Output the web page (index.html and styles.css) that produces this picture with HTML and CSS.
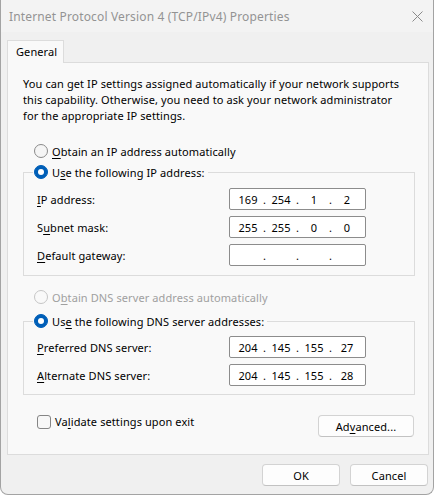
FILE: index.html
```html
<!DOCTYPE html>
<html lang="en">
<head>
<meta charset="utf-8">
<title>Internet Protocol Version 4 (TCP/IPv4) Properties</title>
<link rel="stylesheet" href="styles.css">
</head>
<body>
<div class="window">
  <div class="titlebar">
    <span class="title">Internet Protocol Version 4 (TCP/IPv4) Properties</span>
    <svg class="close" width="11" height="11" viewBox="0 0 11 11" aria-hidden="true"><path d="M0.5 0.5 L10.5 10.5 M10.5 0.5 L0.5 10.5" stroke="#8a8a8a" stroke-width="1" fill="none"/></svg>
  </div>
  <div class="client">
    <div class="tabs"><div class="tab">General</div></div>
    <div class="panel">
      <p class="intro">You can get IP settings assigned automatically if your network supports<br>this capability. Otherwise, you need to ask your network administrator<br>for the appropriate IP settings.</p>

      <div class="radio-row first-radio">
        <span class="radio"></span><span><u>O</u>btain an IP address automatically</span>
      </div>

      <fieldset class="group ip-group">
        <legend class="radio-row legend"><span class="radio checked"></span><span>U<u>s</u>e the following IP address:</span></legend>
        <div class="field-row">
          <span class="label"><u>I</u>P address:</span>
          <div class="ip-box"><span class="seg">169</span><span class="dot">.</span><span class="seg">254</span><span class="dot">.</span><span class="seg">1</span><span class="dot">.</span><span class="seg">2</span></div>
        </div>
        <div class="field-row">
          <span class="label">S<u>u</u>bnet mask:</span>
          <div class="ip-box"><span class="seg">255</span><span class="dot">.</span><span class="seg">255</span><span class="dot">.</span><span class="seg">0</span><span class="dot">.</span><span class="seg">0</span></div>
        </div>
        <div class="field-row">
          <span class="label"><u>D</u>efault gateway:</span>
          <div class="ip-box"><span class="seg"></span><span class="dot">.</span><span class="seg"></span><span class="dot">.</span><span class="seg"></span><span class="dot">.</span><span class="seg"></span></div>
        </div>
      </fieldset>

      <div class="radio-row dns-radio disabled">
        <span class="radio"></span><span>O<u>b</u>tain DNS server address automatically</span>
      </div>

      <fieldset class="group dns-group">
        <legend class="radio-row legend"><span class="radio checked"></span><span>Us<u>e</u> the following DNS server addresses:</span></legend>
        <div class="field-row">
          <span class="label"><u>P</u>referred DNS server:</span>
          <div class="ip-box"><span class="seg">204</span><span class="dot">.</span><span class="seg">145</span><span class="dot">.</span><span class="seg">155</span><span class="dot">.</span><span class="seg">27</span></div>
        </div>
        <div class="field-row">
          <span class="label"><u>A</u>lternate DNS server:</span>
          <div class="ip-box"><span class="seg">204</span><span class="dot">.</span><span class="seg">145</span><span class="dot">.</span><span class="seg">155</span><span class="dot">.</span><span class="seg">28</span></div>
        </div>
      </fieldset>

      <div class="bottom-row">
        <div class="check-row"><span class="checkbox"></span><span>Va<u>l</u>idate settings upon exit</span></div>
        <button class="btn advanced" type="button">Ad<u>v</u>anced...</button>
      </div>
    </div>
    <div class="dialog-buttons">
      <button class="btn" type="button">OK</button>
      <button class="btn" type="button">Cancel</button>
    </div>
  </div>
</div>
</body>
</html>
```
FILE: styles.css
```css
* { box-sizing: border-box; }
html, body { margin: 0; padding: 0; }
body {
  width: 434px;
  height: 497px;
  background: #ffffff;
  font-family: "Noto Sans", "Open Sans", sans-serif;
  font-size: 11px;
  letter-spacing: 0.1px;
  color: #000;
  overflow: hidden;
}
u { text-decoration: underline; text-underline-offset: 2px; }

.window {
  width: 434px;
  height: 495px;
  background: #f0f0f0;
  border: 1px solid #a3a3a3;
  border-top: none;
  border-radius: 0 0 8px 8px;
  display: flex;
  flex-direction: column;
}

.titlebar {
  height: 32px;
  flex: none;
  display: flex;
  align-items: center;
  justify-content: space-between;
  padding: 0 10px 0 8px;
  background: #f3f3f3;
}
.title { color: #939393; font-size: 12px; letter-spacing: 0.15px; }
.close { display: block; }

.client {
  padding: 8px 0 0 6px;
  display: flex;
  flex-direction: column;
}

.tabs { display: flex; height: 22px; }
.tab {
  position: relative;
  z-index: 1;
  width: 57px;
  height: 23px;
  background: #f9f9f9;
  border: 1px solid #dcdcdc;
  border-bottom: none;
  padding-left: 8px;
  line-height: 21px;
}

.panel {
  width: 422px;
  height: 393px;
  background: #f9f9f9;
  border: 1px solid #dcdcdc;
  padding: 13px 13px 0 15px;
  display: flex;
  flex-direction: column;
}

.intro {
  margin: 0;
  line-height: 16px;
  white-space: nowrap;
}

.radio-row {
  display: flex;
  align-items: center;
  gap: 4px;
  height: 20px;
  white-space: nowrap;
}
.first-radio { margin-top: 17px; padding-left: 11px; }
.dns-radio { margin-top: 11px; padding-left: 11px; }
.disabled { color: #a0a0a0; }

.radio {
  width: 14px;
  height: 14px;
  border-radius: 50%;
  border: 1px solid #8a8a8a;
  background: #f5f5f5;
  flex: none;
  position: relative;
}
.disabled .radio { border-color: #c6c6c6; background: #f9f9f9; }
.radio.checked { background: #005fb8; border-color: #005fb8; }
.radio.checked::after {
  content: "";
  position: absolute;
  left: 3px;
  top: 3px;
  width: 6px;
  height: 6px;
  border-radius: 50%;
  background: #ffffff;
}

.group {
  margin: 1px 0 0 0;
  border: 1px solid #dcdcdc;
  padding: 6px 48px 9px 13px;
  min-width: 0;
  display: flex;
  flex-direction: column;
  gap: 6px;
}
.dns-group { margin-top: 4px; padding-top: 5px; padding-bottom: 8px; }
.legend { padding: 0 3px 0 1px; margin-left: -4px; }

.field-row {
  display: flex;
  align-items: center;
  height: 22px;
}
.label { width: 192px; flex: none; white-space: nowrap; }

.ip-box {
  width: 137px;
  height: 22px;
  background: #ffffff;
  border: 1px solid #8c8c8c;
  border-radius: 2px;
  display: flex;
  align-items: center;
  padding-left: 4px;
  letter-spacing: 0;
}
.seg { width: 28px; text-align: center; }
.dot { width: 5px; text-align: center; }

.bottom-row {
  margin-top: 20px;
  display: flex;
  justify-content: space-between;
  align-items: center;
  padding-right: 1px;
}
.check-row {
  display: flex;
  align-items: center;
  gap: 4px;
  padding-left: 14px;
  margin-top: -9px;
}
.checkbox {
  width: 14px;
  height: 14px;
  border: 1px solid #858585;
  border-radius: 3px;
  background: #f7f7f7;
  flex: none;
}

.btn {
  font: inherit;
  letter-spacing: inherit;
  color: #000;
  height: 22px;
  background: #fdfdfd;
  border: 1px solid #d3d3d3;
  border-bottom-color: #c2c2c2;
  border-radius: 4px;
  padding: 0;
}
.advanced { width: 96px; }

.dialog-buttons {
  width: 422px;
  margin-top: 9px;
  display: flex;
  justify-content: flex-end;
  gap: 10px;
  padding-right: 1px;
}
.dialog-buttons .btn { width: 78px; }
```
